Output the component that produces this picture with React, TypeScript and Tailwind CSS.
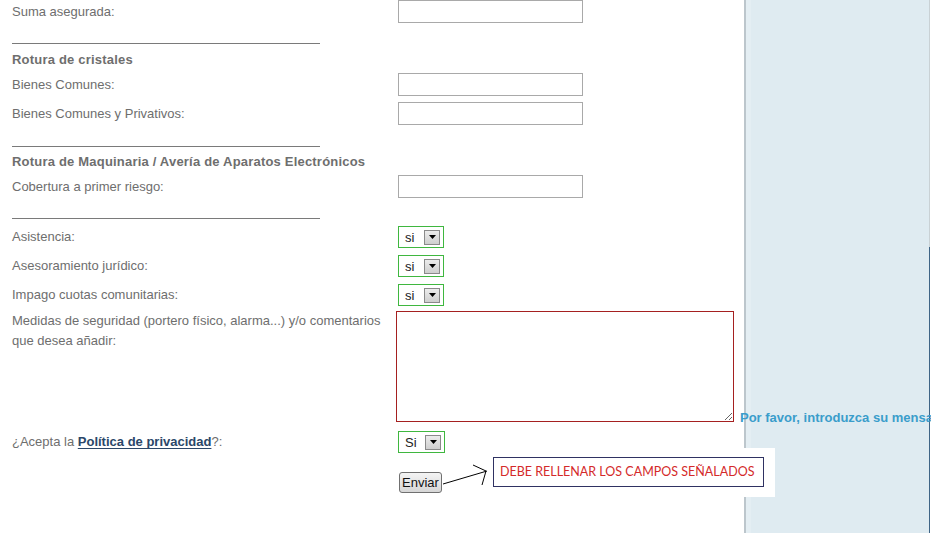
import React from "react";

const label = "text-[13px] text-[#6e6e6e]";

function TextInput() {
  return <div className="w-[185px] h-[23px] border border-[#a9a9a9] bg-white shrink-0" />;
}

function SelectBox({ value, w = 46 }: { value: string; w?: number }) {
  return (
    <div
      className="h-[22px] border border-[#3fb73f] bg-white flex items-center pl-[6px] pr-[3px] shrink-0"
      style={{ width: w }}
    >
      <span className="text-[13px] text-[#222] leading-none">{value}</span>
      <div className="ml-auto w-[16px] h-[15px] border border-[#8a8a8a] bg-gradient-to-b from-[#ececec] to-[#cfcfcf] flex items-center justify-center">
        <svg width="7" height="4" viewBox="0 0 7 4">
          <polygon points="0,0 7,0 3.5,4" fill="#000" />
        </svg>
      </div>
    </div>
  );
}

function Row({ text, children, className = "" }: { text: string; children: React.ReactNode; className?: string }) {
  return (
    <div className={"flex items-center " + className}>
      <div className={"w-[386px] shrink-0 " + label}>{text}</div>
      {children}
    </div>
  );
}

function Hr({ className = "" }: { className?: string }) {
  return <div className={"w-[308px] h-px bg-[#7a7a7a] " + className} />;
}

function Heading({ text, className = "" }: { text: string; className?: string }) {
  return (
    <div className={"h-[20px] leading-[20px] text-[13px] font-bold tracking-[0.2px] text-[#6e6e6e] " + className}>
      {text}
    </div>
  );
}

export default function App() {
  return (
    <div
      className="relative flex w-[931px] h-[533px] overflow-hidden bg-white"
      style={{ fontFamily: '"Liberation Sans", Arial, sans-serif' }}
    >
      <div className="relative z-10 w-[744px] shrink-0 pl-[12px] flex flex-col">
        <Row text="Suma asegurada:" className="h-[23px]">
          <TextInput />
        </Row>
        <Hr className="mt-[20px]" />
        <Heading text="Rotura de cristales" className="mt-[6px]" />
        <Row text="Bienes Comunes:" className="mt-[3px] h-[23px]">
          <TextInput />
        </Row>
        <Row text="Bienes Comunes y Privativos:" className="mt-[6px] h-[23px]">
          <TextInput />
        </Row>
        <Hr className="mt-[21px]" />
        <Heading text="Rotura de Maquinaria / Avería de Aparatos Electrónicos" className="mt-[5px]" />
        <Row text="Cobertura a primer riesgo:" className="mt-[3px] h-[23px]">
          <TextInput />
        </Row>
        <Hr className="mt-[20px]" />
        <Row text="Asistencia:" className="mt-[7px] h-[22px]">
          <SelectBox value="si" />
        </Row>
        <Row text="Asesoramiento jurídico:" className="mt-[7px] h-[22px]">
          <SelectBox value="si" />
        </Row>
        <Row text="Impago cuotas comunitarias:" className="mt-[7px] h-[22px]">
          <SelectBox value="si" />
        </Row>
        <div className="mt-[5px] flex items-start">
          <div className={"w-[370px] shrink-0 leading-[20px] " + label}>
            Medidas de seguridad (portero físico, alarma...) y/o comentarios que desea añadir:
          </div>
          <div className="ml-[14px] flex items-end">
            <textarea
              readOnly
              className="block w-[338px] h-[111px] border border-[#a52020] bg-white outline-none"
            />
            <span className="ml-[6px] mb-[-5px] whitespace-nowrap text-[13px] font-bold text-[#3a9dcb]">
              Por favor, introduzca su mensaje
            </span>
          </div>
        </div>
        <div className="mt-[9px] flex items-center h-[22px]">
          <div className={"w-[386px] shrink-0 " + label}>
            ¿Acepta la{" "}
            <span className="font-bold text-[#2b4769] underline underline-offset-2">Política de privacidad</span>
            ?:
          </div>
          <SelectBox value="Si" w={47} />
        </div>
        <div className="mt-[17px] pl-[387px]">
          <button className="h-[21px] w-[43px] rounded-[3px] border border-[#707070] bg-gradient-to-b from-[#f4f4f4] to-[#d6d6d6] text-[13px] text-[#111] leading-none">
            Enviar
          </button>
        </div>
      </div>

      <div className="flex-1 flex h-full">
        <div className="w-[2px] bg-[#bcc6cc]" />
        <div className="w-[5px] bg-[#e4eef3]" />
        <div className="flex-1 bg-[#dfebf1]" />
        <div className="w-[1px] bg-[#c9d1d5] flex flex-col">
          <div className="h-[247px]" />
          <div className="flex-1 bg-[#3f6486]" />
        </div>
        <div className="w-[1px] bg-white" />
      </div>

      <div className="absolute left-[484px] top-[448px] z-20 w-[291px] h-[49px] bg-white pl-[9px] pt-[9px]">
        <div className="w-[271px] h-[30px] border border-[#2f3262] flex items-center pl-[6px]">
          <span className="text-[12.5px] text-[#d42a2a] whitespace-nowrap" style={{ fontFamily: 'Lato, "Open Sans", sans-serif' }}>
            DEBE RELLENAR LOS CAMPOS SEÑALADOS
          </span>
        </div>
      </div>

      <svg className="absolute left-[440px] top-[460px] z-30" width="52" height="30" viewBox="0 0 52 30">
        <line x1="3" y1="24" x2="47" y2="11" stroke="#000" strokeWidth="1" />
        <polyline points="33,5 46,11 42,25" fill="none" stroke="#000" strokeWidth="1" />
      </svg>
    </div>
  );
}
